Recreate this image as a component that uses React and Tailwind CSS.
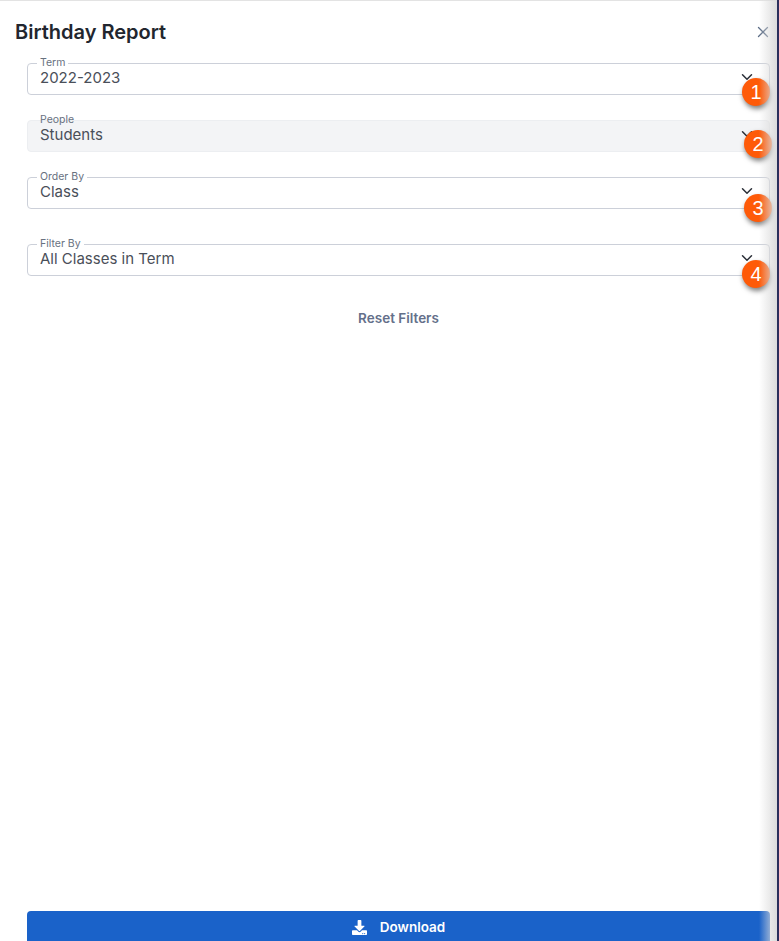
import React from 'react';
import { FaDownload } from 'react-icons/fa';
import { ChevronDown, X } from 'lucide-react';

const fields = [
  { label: 'Term', value: '2022-2023', badge: '1', margin: 'mt-0', filled: false, badgePos: 'top-[14px] left-[714px]' },
  { label: 'People', value: 'Students', badge: '2', margin: 'mt-[25px]', filled: true, badgePos: 'top-[9px] left-[716px]' },
  { label: 'Order By', value: 'Class', badge: '3', margin: 'mt-[25px]', filled: false, badgePos: 'top-[16px] left-[716px]' },
  { label: 'Filter By', value: 'All Classes in Term', badge: '4', margin: 'mt-[35px]', filled: false, badgePos: 'top-[15px] left-[714px]' },
];

function Field({ field }) {
  return (
    <div className={`relative h-[32px] rounded-[4px] border flex items-center justify-between pl-[12px] pr-[13px] ${field.margin} ${field.filled ? 'bg-[#f3f4f6] border-[#eceef1]' : 'bg-white border-[#ccd0d9]'}`}>
      <span className={`absolute top-[-8px] left-[9px] px-[3px] text-[10.5px] leading-[14px] text-[#68717f] ${field.filled ? '' : 'bg-white'}`}>
        {field.label}
      </span>
      <span className="text-[15px] leading-[20px] text-[#4a4f59] mt-[-2px]">{field.value}</span>
      <ChevronDown size={18} strokeWidth={2} className="text-[#2b2f38] mt-[-5px]" />
      <span className={`absolute w-[28px] h-[28px] rounded-full bg-[#fe5a08] text-white flex items-center justify-center text-[20px] leading-none shadow-[1px_3px_5px_rgba(0,0,0,0.5)] font-['Liberation_Sans',sans-serif] ${field.badgePos}`}>
        {field.badge}
      </span>
    </div>
  );
}

export default function App() {
  return (
    <div className="relative flex h-[941px] w-[779px] overflow-hidden bg-white font-['Inter',sans-serif]">
      <div className="flex-1 flex flex-col border-t border-[#e3e3e3] min-w-0">
        <div className="flex items-start justify-between pl-[15px] pr-[5px] pt-[18px] h-[62px]">
          <h1 className="text-[20px] leading-[26px] font-semibold text-[#22262e]">Birthday Report</h1>
          <X size={18} strokeWidth={1.7} className="text-[#5a6b85] mt-[4px]" />
        </div>
        <div className="pl-[27px] pr-[7px] flex flex-col flex-1">
          {fields.map((f) => (
            <Field key={f.label} field={f} />
          ))}
          <div className="mt-[33px] text-center text-[13.5px] leading-[18px] font-semibold text-[#64708a]">Reset Filters</div>
          <button className="mt-auto h-[30px] rounded-t-[4px] bg-[#1a62c9] text-white flex items-center justify-center gap-[13px] text-[13.5px] font-semibold pt-[2px]">
            <FaDownload size={15} />
            Download
          </button>
        </div>
      </div>
      <div className="absolute top-0 bottom-0 right-[2px] w-[18px] bg-gradient-to-r from-transparent to-[#dcdcdc] pointer-events-none" />
      <div className="w-[2px] bg-[#2b2f5c] shrink-0" />
    </div>
  );
}
